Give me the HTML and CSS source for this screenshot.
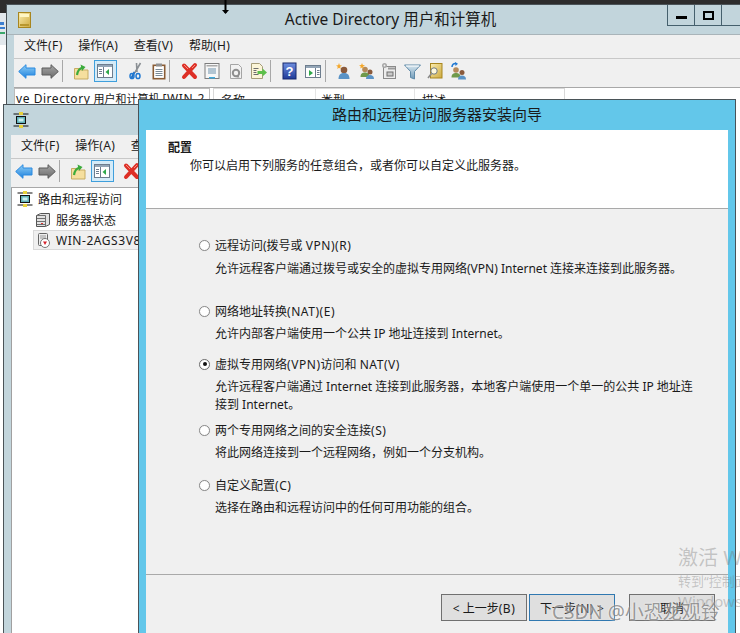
FILE: index.html
```html
<!DOCTYPE html>
<html lang="zh-CN">
<head>
    <meta charset="UTF-8">
    <title>路由和远程访问服务器安装向导</title>
    <link rel="stylesheet" href="styles.css">
</head>
<body>
    <!-- shared toolbar icons -->
    <svg class="icon-defs" width="0" height="0">
        <defs>
            <linearGradient id="g-blue" x1="0" y1="0" x2="0" y2="1"><stop offset="0" stop-color="#8fd0f7"/><stop offset="1" stop-color="#1d7fdc"/></linearGradient>
            <linearGradient id="g-grey" x1="0" y1="0" x2="0" y2="1"><stop offset="0" stop-color="#a8a8a8"/><stop offset="1" stop-color="#6a6a6a"/></linearGradient>
            <linearGradient id="g-help" x1="0" y1="0" x2="0" y2="1"><stop offset="0" stop-color="#6f8fe0"/><stop offset="1" stop-color="#1f3a98"/></linearGradient>
            <linearGradient id="g-gold" x1="0" y1="0" x2="1" y2="1"><stop offset="0" stop-color="#fbeeb0"/><stop offset="1" stop-color="#cda93e"/></linearGradient>
            <linearGradient id="g-funnel" x1="0" y1="0" x2="0" y2="1"><stop offset="0" stop-color="#d7e6ef"/><stop offset="1" stop-color="#6f9ab8"/></linearGradient>
        </defs>
        <symbol id="i-back" viewBox="0 0 18 18"><path d="M.7 9.500L8 2.700V6h9v7H8v3.300z" fill="url(#g-blue)" stroke="#2a8ae0"/></symbol>
        <symbol id="i-forward" viewBox="0 0 18 18"><path d="M17.300 9.500L10 2.700V6H1v7h9v3.300z" fill="url(#g-grey)" stroke="#5a5a5a"/></symbol>
        <symbol id="i-up" viewBox="0 0 18 18"><path d="M1.500 6.500h5l1 1.500h7.500v9h-13.500z" fill="#f6df9e" stroke="#c7ab62"/><path d="M4 13c.5-4 2.500-6.500 5.500-7.500" fill="none" stroke="#3cab3c" stroke-width="2.200"/><path d="M7.500 2.500l5 2.500-3.500 4z" fill="#3cab3c"/></symbol>
        <symbol id="i-tree-left" viewBox="0 0 18 18"><rect x="1.500" y="2.500" width="15" height="13" fill="#fff" stroke="#6d7d8e"/><rect x="2" y="3" width="14" height="2" fill="#93a5b6"/><path d="M7.500 5v10" stroke="#6d7d8e"/><path d="M3 7.500h3M3 9.500h3M3 11.500h3" stroke="#6d7d8e"/><path d="M13 7v6l-3.500-3z" fill="#2fa84a"/></symbol>
        <symbol id="i-cut" viewBox="0 0 18 18"><path d="M14.500 1L9 10.500M10.500 1L11 10" stroke="#8a8f94" stroke-width="1.600" fill="none"/><path d="M8.500 10L5.500 16" stroke="#1f6fc4" stroke-width="2"/><ellipse cx="6" cy="14" rx="2" ry="2.600" fill="none" stroke="#1f78d2" stroke-width="1.500"/><ellipse cx="12" cy="14" rx="2" ry="2.600" fill="none" stroke="#1f78d2" stroke-width="1.500"/></symbol>
        <symbol id="i-paste" viewBox="0 0 18 18"><rect x="4.300" y="3.300" width="11.400" height="13.400" fill="#fff" stroke="#8a5c34" stroke-width="1.600"/><rect x="7" y="1.500" width="6" height="3" fill="#8f8f8f"/><path d="M6.500 7.500h7M6.500 9.500h7M6.500 11.500h7M6.500 13.500h7" stroke="#7a8a96"/></symbol>
        <symbol id="i-delete" viewBox="0 0 18 18"><path d="M3 3.500l11 11.500M14 3L3 15" stroke="#dd2f26" stroke-width="4" stroke-linecap="round"/><path d="M3 3l4 4M14 3l-3 3" stroke="#f58d80"/></symbol>
        <symbol id="i-props" viewBox="0 0 18 18"><rect x="1" y="1.500" width="14" height="15" fill="#f7f7f7" stroke="#7d7d7d"/><rect x="2.500" y="3" width="11" height="1.500" fill="#aaa"/><path d="M4 7h8M4 9h8M4 11h8" stroke="#6e93ad"/><rect x="5" y="15" width="6" height="1.500" fill="#3fa9dc"/></symbol>
        <symbol id="i-refresh" viewBox="0 0 18 18"><path d="M3.500 2.500h8l3 3v11h-11z" fill="#f2f2f2" stroke="#a5a5a5"/><circle cx="9" cy="11" r="3.200" fill="none" stroke="#8f8f8f" stroke-width="2"/><path d="M11 13l1.500 2.500-3 0z" fill="#8f8f8f"/></symbol>
        <symbol id="i-export" viewBox="0 0 18 18"><path d="M1.500 1.500h8l3 3v12h-11z" fill="#fbf5d8" stroke="#a59c78"/><path d="M3.500 6.500h5M3.500 8.500h3M3.500 10.500h3M3.500 12.500h5" stroke="#6c6c6c"/><path d="M7.500 9h5V6.500L17 10.500l-4.500 4V12h-5z" fill="#5cc04a"/></symbol>
        <symbol id="i-help" viewBox="0 0 18 18"><rect x="1" y="1" width="13" height="16" fill="url(#g-help)" stroke="#17286e"/><text x="7.500" y="14" font-size="13" font-weight="700" fill="#fff" text-anchor="middle" font-family="Liberation Sans">?</text></symbol>
        <symbol id="i-tree-right" viewBox="0 0 18 18"><rect x=".5" y="3.500" width="15" height="12" fill="#fff" stroke="#6d7d8e"/><rect x="1" y="4" width="14" height="2" fill="#93a5b6"/><path d="M10.500 6v9" stroke="#6d7d8e"/><path d="M12 8.500h2.500M12 10.500h2.500M12 12.500h2.500" stroke="#6d7d8e"/><path d="M4 8v6l4-3z" fill="#2fa84a"/></symbol>
        <symbol id="i-user" viewBox="0 0 18 18"><circle cx="9" cy="8" r="3.300" fill="#8a5a3c"/><path d="M3.500 17c0-4.500 2.500-6 5.500-6s5.500 1.500 5.500 6z" fill="#5a93c6"/><path d="M4 1l.8 2.200L7 3.500l-1.800 1.300.6 2.200L4 5.800 2.200 7l.6-2.200L1 3.500l2.200-.3z" fill="#f4a72a"/></symbol>
        <symbol id="i-group" viewBox="0 0 18 18"><circle cx="7" cy="7.500" r="2.800" fill="#b58a5a"/><path d="M2.500 15c0-3.500 2-4.500 4.500-4.500s4.500 1 4.500 4.500z" fill="#6f9a4c"/><circle cx="12" cy="10" r="2.500" fill="#8a5a3c"/><path d="M8 17c0-3 1.800-4 4-4s4 1 4 4z" fill="#5a93c6"/><path d="M4 1l.8 2L7 3.300l-1.800 1.200.6 2L4 5.500 2.200 6.500l.6-2L1 3.300 3.200 3z" fill="#f4a72a"/></symbol>
        <symbol id="i-ou" viewBox="0 0 18 18"><rect x="2.500" y="4.500" width="12" height="12" fill="#ececec" stroke="#8a8a8a"/><rect x="7" y="5.500" width="7" height="2" fill="#9a9a9a"/><rect x="6" y="10" width="6" height="4" fill="#c8c8c8" stroke="#6e6e6e"/><circle cx="3.500" cy="3.500" r="2.500" fill="#a8a8a8"/><circle cx="3.500" cy="3.500" r=".9" fill="#eee"/></symbol>
        <symbol id="i-filter" viewBox="0 0 18 18"><path d="M.5 3h16l-6 6.500V17l-4-1.500V9.500z" fill="url(#g-funnel)" stroke="#5f8aa8"/><path d="M2 4h13" stroke="#fff"/></symbol>
        <symbol id="i-find" viewBox="0 0 18 18"><rect x="3.500" y="1.500" width="11.500" height="14.500" fill="url(#g-gold)" stroke="#a8861f"/><circle cx="7" cy="9" r="3.200" fill="#fdf8dc" stroke="#6f7880"/><path d="M4.500 11.500L1 16" stroke="#8a8a8a" stroke-width="1.600"/></symbol>
        <symbol id="i-group-move" viewBox="0 0 18 18"><path d="M2 5c0-2.500 2-4 4-3.500" fill="none" stroke="#1f78d2" stroke-width="1.500"/><path d="M5 0l3 1.800L5.500 4z" fill="#1f78d2"/><circle cx="6" cy="8" r="2.800" fill="#b58a5a"/><path d="M1.500 15.500c0-3.500 2-4.500 4.500-4.500s4.500 1 4.500 4.500z" fill="#6f9a4c"/><circle cx="12" cy="10.500" r="2.500" fill="#8a5a3c"/><path d="M8 17.500c0-3 1.800-4 4-4s4 1 4 4z" fill="#5a93c6"/></symbol>
        <symbol id="i-rras" viewBox="0 0 16 16"><path d="M.5 2h15M.5 14h15" stroke="#111"/><rect x="3.500" y="4.500" width="9" height="7" fill="#5fb0b8" stroke="#111"/><rect x="5.500" y="6.500" width="5" height="3" fill="#c8eef0"/><rect x="6" y="0" width="4" height="3" fill="#e8d23a"/><rect x="6" y="13" width="4" height="3" fill="#e8d23a"/></symbol>
    </svg>

    <div class="desktop">
        <div class="topbar"></div>
        <div class="behind-edge">
            <svg width="6" height="32" viewBox="0 0 6 32"><path d="M0 9h4v3H0zM0 14h5v2H0z" fill="#3b7fd0"/><path d="M0 19h5v2H0z" fill="#3aa86b"/></svg>
        </div>

        <!-- Active Directory window -->
        <div class="win win-ad">
            <div class="titlebar">
                <svg class="win-icon" width="13" height="16" viewBox="0 0 13 16"><rect x=".5" y=".5" width="12" height="15" fill="url(#g-gold)" stroke="#a8861f"/><rect x="2" y="2" width="9" height="3" fill="#fff6c4"/><rect x="2" y="12" width="9" height="2" fill="#b8972f"/></svg>
                <span class="title-text">Active Directory 用户和计算机</span>
                <div class="caption">
                    <span class="cap-btn"><i class="cap-min"></i></span>
                    <span class="cap-btn"><i class="cap-max"></i></span>
                    <span class="cap-btn cap-close"></span>
                </div>
            </div>
            <div class="menubar">
                <span>文件<b class="lat">(F)</b></span><span>操作<b class="lat">(A)</b></span><span>查看<b class="lat">(V)</b></span><span>帮助<b class="lat">(H)</b></span>
            </div>
            <div class="toolbar">
                <svg class="ti"><use href="#i-back"/></svg>
                <svg class="ti"><use href="#i-forward"/></svg>
                <i class="sep"></i>
                <svg class="ti"><use href="#i-up"/></svg>
                <span class="ti-on"><svg class="ti"><use href="#i-tree-left"/></svg></span>
                <svg class="ti ti-gap"><use href="#i-cut"/></svg>
                <svg class="ti"><use href="#i-paste"/></svg>
                <i class="sep"></i>
                <svg class="ti"><use href="#i-delete"/></svg>
                <svg class="ti"><use href="#i-props"/></svg>
                <svg class="ti"><use href="#i-refresh"/></svg>
                <svg class="ti"><use href="#i-export"/></svg>
                <i class="sep"></i>
                <svg class="ti"><use href="#i-help"/></svg>
                <svg class="ti"><use href="#i-tree-right"/></svg>
                <i class="sep sep-tight"></i>
                <svg class="ti"><use href="#i-user"/></svg>
                <svg class="ti"><use href="#i-group"/></svg>
                <svg class="ti"><use href="#i-ou"/></svg>
                <svg class="ti"><use href="#i-filter"/></svg>
                <svg class="ti"><use href="#i-find"/></svg>
                <svg class="ti"><use href="#i-group-move"/></svg>
            </div>
            <div class="ad-panes">
                <div class="ad-tree"><span class="lat">ve Directory</span> <span class="ad-cjk">用户和计算机</span> <span class="lat">[WIN-2</span></div>
                <div class="ad-list">
                    <span class="col col-name">名称</span>
                    <span class="col col-type">类型</span>
                    <span class="col col-desc">描述</span>
                </div>
            </div>
        </div>

        <!-- Routing and remote access console -->
        <div class="win win-rras">
            <div class="titlebar">
                <svg class="win-icon" width="16" height="16"><use href="#i-rras"/></svg>
            </div>
            <div class="menubar">
                <span>文件<b class="lat">(F)</b></span><span>操作<b class="lat">(A)</b></span><span>查</span>
            </div>
            <div class="toolbar">
                <svg class="ti"><use href="#i-back"/></svg>
                <svg class="ti"><use href="#i-forward"/></svg>
                <i class="sep"></i>
                <svg class="ti"><use href="#i-up"/></svg>
                <span class="ti-on"><svg class="ti"><use href="#i-tree-left"/></svg></span>
                <svg class="ti ti-gap"><use href="#i-delete"/></svg>
            </div>
            <div class="tree">
                <div class="tree-row">
                    <svg width="16" height="16"><use href="#i-rras"/></svg>
                    <span>路由和远程访问</span>
                </div>
                <div class="tree-row tree-child">
                    <svg width="16" height="16" viewBox="0 0 16 16"><path d="M1.500 3.500l4-2h9v11l-4 2h-9z" fill="#e2e2e2" stroke="#555"/><path d="M1.500 3.500h9v11M2 6.500h8M2 9.500h8M2 12.500h8" fill="none" stroke="#6f6f6f"/><rect x="6" y="11" width="2" height="1" fill="#d33"/></svg>
                    <span>服务器状态</span>
                </div>
                <div class="tree-row tree-child tree-selected">
                    <svg width="16" height="16" viewBox="0 0 16 16"><rect x="3.500" y="1.500" width="9" height="12" rx="1" fill="#eee" stroke="#666"/><path d="M5 4h6M5 6h6" stroke="#999"/><circle cx="10" cy="11" r="4.500" fill="#fff" stroke="#777"/><path d="M8 9.500h4L10 13z" fill="#d5202a"/></svg>
                    <span class="lat">WIN-2AGS3V8</span>
                </div>
            </div>
        </div>

        <!-- Setup wizard -->
        <div class="win wizard">
            <div class="wizard-title">路由和远程访问服务器安装向导</div>
            <div class="wizard-client">
                <div class="wizard-head">
                    <div class="head-title">配置</div>
                    <div class="head-sub">你可以启用下列服务的任意组合，或者你可以自定义此服务器。</div>
                </div>
                <div class="wizard-body">
                    <div class="opt opt-1">
                        <label><i class="radio"></i>远程访问(拨号或 <b class="lat">VPN)(R)</b></label>
                        <p>允许远程客户端通过拨号或安全的虚拟专用网络(VPN) Internet 连接来连接到此服务器。</p>
                    </div>
                    <div class="opt opt-2">
                        <label><i class="radio"></i>网络地址转换<b class="lat">(NAT)(E)</b></label>
                        <p>允许内部客户端使用一个公共 IP 地址连接到 Internet。</p>
                    </div>
                    <div class="opt opt-3">
                        <label><i class="radio radio-on"></i>虚拟专用网络<b class="lat">(VPN)</b>访问和 <b class="lat">NAT(V)</b></label>
                        <p>允许远程客户端通过 Internet 连接到此服务器，本地客户端使用一个单一的公共 IP 地址连接到 Internet。</p>
                    </div>
                    <div class="opt opt-4">
                        <label><i class="radio"></i>两个专用网络之间的安全连接<b class="lat">(S)</b></label>
                        <p>将此网络连接到一个远程网络，例如一个分支机构。</p>
                    </div>
                    <div class="opt">
                        <label><i class="radio"></i>自定义配置<b class="lat">(C)</b></label>
                        <p>选择在路由和远程访问中的任何可用功能的组合。</p>
                    </div>
                </div>
                <div class="wizard-foot">
                    <button class="btn">&lt; 上一步<b class="lat">(B)</b></button>
                    <button class="btn btn-default">下一步<b class="lat">(N)</b> &gt;</button>
                    <button class="btn btn-cancel">取消</button>
                </div>
            </div>
        </div>

        <svg class="cursor" width="9" height="15" viewBox="0 0 9 15"><path d="M4.500 0v13" stroke="#000" stroke-width="2"/><path d="M1 10h7l-3.500 4z" fill="#000"/></svg>

        <div class="activate">
            <div class="act-big">激活 Windows</div>
            <div class="act-small">转到“控制面板”以激活</div>
            <div class="act-win">Windows</div>
        </div>
        <div class="csdn">CSDN @小恐龙观铃</div>
    </div>
</body>
</html>
```

FILE: styles.css
```css
* {
    box-sizing: border-box;
}

body {
    margin: 0;
    font-family: "Noto Sans", "Noto Sans CJK SC", sans-serif;
    font-size: 12px;
    color: #1a1a1a;
    overflow: hidden;
}

.icon-defs {
    position: absolute;
}

.lat {
    font-weight: 400;
    letter-spacing: 0.55px;
}

.desktop {
    position: relative;
    width: 740px;
    height: 633px;
    background: #fff;
    overflow: hidden;
}

.topbar {
    height: 4px;
    background: #2d2d2d;
}

.behind-edge {
    position: absolute;
    left: 0;
    top: 4px;
    width: 6px;
    height: 41px;
    background: linear-gradient(#2d2d2d 9px, #e2e8ec 9px);
    padding-top: 9px;
}

.behind-edge svg {
    display: block;
}

/* windows on the desktop */
.win {
    position: absolute;
    border: 1px solid #4a5358;
    background: #c2d5dc;
}

.win-ad {
    left: 6px;
    top: 4px;
    width: 760px;
    height: 640px;
}

.win-rras {
    left: 3px;
    top: 104px;
    width: 400px;
    height: 560px;
}

.titlebar {
    position: relative;
    height: 30px;
    display: flex;
    align-items: center;
    padding-left: 11px;
}

.win-ad .titlebar {
    border-bottom: 1px solid #a9b4b9;
}

.win-rras .titlebar {
    padding-left: 9px;
}

.win-icon {
    flex: none;
}

.title-text {
    position: absolute;
    left: 0;
    width: 767px;
    text-align: center;
    font-size: 15.5px;
    top: 4px;
    line-height: 20px;
}

.caption {
    position: absolute;
    left: 660px;
    top: 0;
    display: flex;
    height: 21px;
    border: 1px solid #45606d;
    border-top: 0;
}

.cap-btn {
    width: 27px;
    display: flex;
    justify-content: center;
    border-right: 1px solid #45606d;
}

.cap-min {
    width: 11px;
    height: 3px;
    background: #000;
    margin-top: 11px;
}

.cap-max {
    width: 11px;
    height: 9px;
    border: 2px solid #000;
    margin-top: 6px;
}

.cap-close {
    width: 40px;
    border-right: 0;
}

.menubar {
    margin-left: 7px;
    height: 24px;
    background: #f0f0f0;
    display: flex;
    gap: 15.500px;
    padding-left: 10px;
    line-height: 22px;
    border-bottom: 1px solid #c8c8c8;
}

.menubar .lat {
    letter-spacing: 0.4px;
}

.toolbar {
    margin-left: 7px;
    height: 29px;
    background: #f0f0f0;
    display: flex;
    align-items: center;
    padding: 0 0 5px 1.500px;
    border-bottom: 1px solid #a8a8a8;
}

.ti {
    width: 18px;
    height: 18px;
    margin: 0 2.500px;
    flex: none;
}

.ti-gap {
    margin-left: 9px;
}

.ti-on {
    display: flex;
    align-items: center;
    justify-content: center;
    flex: none;
    width: 23px;
    height: 22px;
    background: #d4ebf8;
    border: 1px solid #3f9fdc;
}

.ti-on .ti {
    margin: 0;
}

.sep {
    width: 1px;
    height: 22px;
    background: #a8a8a8;
    margin-right: 8px;
    flex: none;
}

.sep-tight {
    margin-right: 6px;
}

.ad-panes {
    margin-left: 7px;
    display: flex;
    height: 560px;
    background: #fff;
}

.ad-tree {
    width: 196px;
    height: 20px;
    border: 1px solid #bbb;
    padding-left: 1px;
    white-space: nowrap;
    overflow: hidden;
    line-height: 20px;
}

.ad-cjk {
    font-size: 11px;
}

.ad-list {
    display: flex;
    margin-left: 3px;
    height: 20px;
    border: 1px solid #d8d8d8;
}

.col {
    display: block;
    height: 20px;
    padding-left: 7px;
    border-right: 1px solid #e4e4e4;
    line-height: 24px;
}

.col-name {
    width: 102px;
}

.col-type {
    width: 99px;
    padding-left: 5px;
}

.col-desc {
    width: 149px;
    border-right: 0;
}

.tree {
    margin-left: 7px;
    height: 470px;
    padding: 1px 0 0 5px;
    background: #fff;
    border-left: 1px solid #a0a0a0;
    white-space: nowrap;
}

.tree-row {
    display: flex;
    align-items: center;
    gap: 5px;
    height: 20px;
}

.tree-child {
    margin: 1px 0 -1px 16px;
    padding-left: 2px;
}

.tree-selected {
    background: #f0f0f0;
    border: 1px solid #d9d9d9;
    padding-left: 1px;
}

/* setup wizard */
.wizard {
    left: 138px;
    top: 99px;
    width: 598px;
    height: 600px;
    background: #63c7ea;
    padding: 0 7px;
}

.wizard-title {
    height: 30px;
    text-align: center;
    font-size: 15px;
    line-height: 28px;
}

.wizard-client {
    height: 560px;
    display: flex;
    flex-direction: column;
    background: #f0f0f0;
}

.wizard-head {
    height: 79px;
    background: #fff;
    border-bottom: 1px solid #a9a9a9;
    padding: 10px 0 0 22px;
    line-height: 16px;
}

.head-title {
    font-weight: 700;
}

.head-sub {
    padding-left: 22px;
    margin-top: 2px;
}

.wizard-body {
    height: 366px;
    padding: 27px 0 0 53px;
    border-bottom: 1px solid #a9a9a9;
}

.opt label {
    display: flex;
    align-items: center;
    height: 18px;
    white-space: pre;
}

.opt p {
    margin: 5px 0 0 16px;
    line-height: 18px;
    width: 480px;
}

.opt-1 {
    height: 66px;
}

.opt-1 p {
    margin-top: 6px;
}

.opt-2 {
    height: 53px;
}

.opt-3 {
    height: 66px;
}

.opt-4 {
    height: 55px;
}

.radio {
    width: 11px;
    height: 11px;
    border-radius: 50%;
    border: 1px solid #8a8a8a;
    background: #fff;
    box-shadow: 0 0 1px #d0d0d0;
    margin-right: 5px;
    flex: none;
    position: relative;
}

.radio-on {
    border-color: #6f6f6f;
}

.radio-on::after {
    content: "";
    position: absolute;
    left: 2.500px;
    top: 2.500px;
    width: 4px;
    height: 4px;
    border-radius: 50%;
    background: #111;
}

.wizard-foot {
    display: flex;
    padding: 19px 0 0 295px;
}

.btn {
    width: 86px;
    height: 27px;
    margin-right: 2px;
    background: #dfdfdf;
    border: 1px solid #707070;
    font: inherit;
    color: inherit;
    padding: 0;
}

.btn-default {
    border-color: #3078b0;
}

.btn-cancel {
    margin-left: 12px;
}

/* things over the windows */
.cursor {
    position: absolute;
    left: 221px;
    top: 0;
}

.activate {
    position: absolute;
    left: 678px;
    top: 545px;
    color: rgba(120, 120, 120, 0.38);
    white-space: nowrap;
}

.act-big {
    font-size: 20px;
    line-height: 26px;
}

.act-small {
    font-size: 13px;
    line-height: 21px;
}

.act-win {
    font-size: 15px;
    line-height: 19px;
}

.csdn {
    position: absolute;
    left: 552px;
    top: 601px;
    font-size: 19px;
    line-height: 22px;
    color: rgba(95, 95, 95, 0.62);
    text-shadow: 0 0 2px rgba(255, 255, 255, 0.9);
    white-space: nowrap;
}
```
